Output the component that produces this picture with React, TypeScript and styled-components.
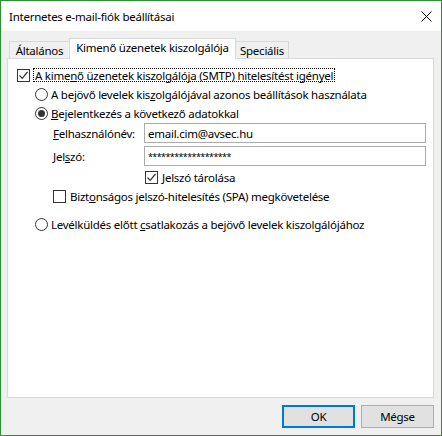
import React from "react";
import styled, { createGlobalStyle } from "styled-components";

const Global = createGlobalStyle`
  html, body { margin: 0; padding: 0; background: #ffffff; }
  body { font-family: "Noto Sans", "Open Sans", sans-serif; font-size: 11.5px; letter-spacing: -0.25px; color: #000; }
  * { box-sizing: border-box; }
`;

const Window = styled.div`
  width: 442px;
  height: 436px;
  border: 1px solid #2f8f35;
  display: flex;
  flex-direction: column;
  background: #f0f0f0;
`;

const TitleBar = styled.div`
  height: 30px;
  background: #ffffff;
  display: flex;
  align-items: center;
  justify-content: space-between;
  padding: 0 9px 0 8px;
  font-size: 11.5px;
`;

const Body = styled.div`
  flex: 1;
  display: flex;
  flex-direction: column;
  padding: 7px 7px 0 6px;
`;

const TabStrip = styled.div`
  height: 21px;
  display: flex;
  align-items: flex-end;
  padding-left: 2px;
  margin-bottom: -1px;
  position: relative;
  z-index: 1;
`;

const Tab = styled.div<{ $w: number; $active?: boolean; $first?: boolean; $last?: boolean }>`
  width: ${(p) => p.$w}px;
  height: ${(p) => (p.$active ? 21 : 17)}px;
  margin-bottom: ${(p) => (p.$active ? 0 : 1)}px;
  background: ${(p) => (p.$active ? "#ffffff" : "#f0f0f0")};
  border: 1px solid #d9d9d9;
  border-bottom: none;
  ${(p) => (p.$first ? "border-right: none;" : "")}
  ${(p) => (p.$last ? "border-left: none;" : "")}
  display: flex;
  align-items: center;
  justify-content: center;
  padding-bottom: ${(p) => (p.$active ? 3 : 0)}px;
  white-space: nowrap;
`;

const Panel = styled.div`
  flex: 1;
  background: #ffffff;
  border: 1px solid #d9d9d9;
  padding: 7px 7px 0 9px;
  display: flex;
  flex-direction: column;
`;

const Row = styled.div<{ $indent?: number; $top?: number }>`
  display: flex;
  align-items: center;
  height: 18px;
  margin-left: ${(p) => p.$indent ?? 0}px;
  margin-top: ${(p) => p.$top ?? 0}px;
  gap: 3px;
  white-space: nowrap;
`;

const FormRow = styled.div<{ $top?: number }>`
  display: flex;
  align-items: center;
  height: 20px;
  margin-left: 36px;
  margin-top: ${(p) => p.$top ?? 0}px;
`;

const FieldLabel = styled.div`
  width: 91px;
  flex: none;
`;

const Input = styled.div<{ $secret?: boolean }>`
  flex: 1;
  height: 20px;
  border: 1px solid #ababab;
  background: #fff;
  display: flex;
  align-items: center;
  padding-left: 3px;
  font-size: ${(p) => (p.$secret ? "9px" : "inherit")};
  letter-spacing: ${(p) => (p.$secret ? "-0.6px" : "inherit")};
`;

const Box = styled.div`
  width: 13px;
  height: 13px;
  border: 1px solid #333333;
  background: #fff;
  flex: none;
  display: flex;
  align-items: center;
  justify-content: center;
`;

const Radio = styled.div<{ $on?: boolean }>`
  width: 13px;
  height: 13px;
  border: 1px solid #333333;
  border-radius: 50%;
  background: #fff;
  flex: none;
  display: flex;
  align-items: center;
  justify-content: center;
  &::after {
    content: "";
    display: ${(p) => (p.$on ? "block" : "none")};
    width: 7px;
    height: 7px;
    border-radius: 50%;
    background: #333333;
  }
`;

const Focus = styled.span`
  border: 1px dotted #000;
  padding: 0 1px;
  height: 14px;
  display: inline-flex;
  align-items: center;
`;

const Label = styled.span<{ $gap?: number }>`
  margin-left: ${(p) => p.$gap ?? 0}px;
`;

const ButtonBar = styled.div`
  display: flex;
  justify-content: flex-end;
  gap: 6px;
  padding: 7px 0 7px;
`;

const Button = styled.div<{ $def?: boolean }>`
  width: 73px;
  height: 23px;
  background: #e1e1e1;
  border: ${(p) => (p.$def ? "2px solid #0078d7" : "1px solid #adadad")};
  display: flex;
  align-items: center;
  justify-content: center;
`;

const Check = () => (
  <svg width="11" height="11" viewBox="0 0 11 11">
    <path d="M1.5 5.5 L4.2 8.3 L9.5 2" fill="none" stroke="#333" strokeWidth="1.2" />
  </svg>
);

const Close = () => (
  <svg width="11" height="11" viewBox="0 0 11 11">
    <path d="M0.5 0.5 L10.5 10.5 M10.5 0.5 L0.5 10.5" stroke="#000" strokeWidth="1" />
  </svg>
);

export default function App() {
  return (
    <>
      <Global />
      <Window>
        <TitleBar>
          <span>Internetes e-mail-fiók beállításai</span>
          <Close />
        </TitleBar>
        <Body>
          <TabStrip>
            <Tab $w={60} $first>Általános</Tab>
            <Tab $w={167} $active>Kimenő üzenetek kiszolgálója</Tab>
            <Tab $w={53} $last>Speciális</Tab>
          </TabStrip>
          <Panel>
            <Row>
              <Box><Check /></Box>
              <Focus>A kime<u>n</u>ő üzenetek kiszolgálója (SMTP) hitelesítést igényel</Focus>
            </Row>
            <Row $indent={18} $top={1}>
              <Radio />
              <Label>A bejövő levelek kis<u>z</u>olgálójával azonos beállítások használata</Label>
            </Row>
            <Row $indent={18} $top={1}>
              <Radio $on />
              <Label><u>B</u>ejelentkezés a következő adatokkal</Label>
            </Row>
            <FormRow $top={1}>
              <FieldLabel><u>F</u>elhasználónév:</FieldLabel>
              <Input>email.cim@avsec.hu</Input>
            </FormRow>
            <FormRow $top={3}>
              <FieldLabel>Jel<u>s</u>zó:</FieldLabel>
              <Input $secret>*******************</Input>
            </FormRow>
            <Row $indent={128} $top={2}>
              <Box><Check /></Box>
              <Label $gap={1}><u>J</u>elszó tárolása</Label>
            </Row>
            <Row $indent={36} $top={1}>
              <Box />
              <Label $gap={1}>Bizt<u>o</u>nságos jelszó-hitelesítés (SPA) megkövetelése</Label>
            </Row>
            <Row $indent={18} $top={10}>
              <Radio />
              <Label>Levélküldés előtt <u>c</u>satlakozás a bejövő levelek kiszolgálójához</Label>
            </Row>
          </Panel>
          <ButtonBar>
            <Button $def>OK</Button>
            <Button>Mégse</Button>
          </ButtonBar>
        </Body>
      </Window>
    </>
  );
}
